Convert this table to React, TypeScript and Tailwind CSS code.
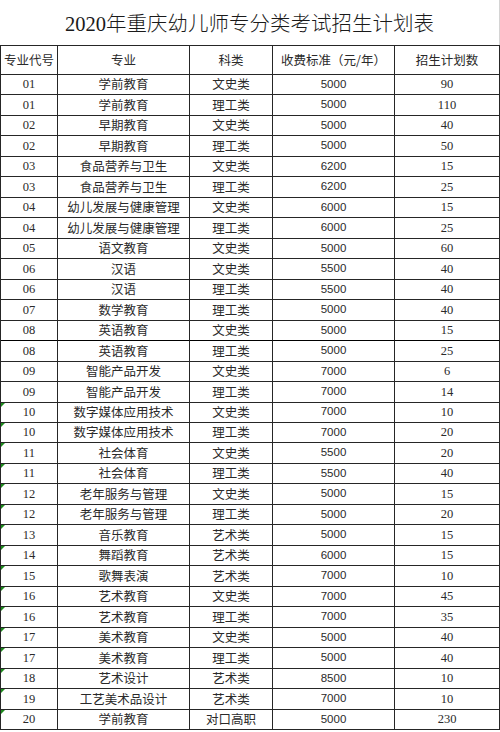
import React from "react";

type Row = [string, string, string, string, string];

const rows: Row[] = [
  ["01", "学前教育", "文史类", "5000", "90"],
  ["01", "学前教育", "理工类", "5000", "110"],
  ["02", "早期教育", "文史类", "5000", "40"],
  ["02", "早期教育", "理工类", "5000", "50"],
  ["03", "食品营养与卫生", "文史类", "6200", "15"],
  ["03", "食品营养与卫生", "理工类", "6200", "25"],
  ["04", "幼儿发展与健康管理", "文史类", "6000", "15"],
  ["04", "幼儿发展与健康管理", "理工类", "6000", "25"],
  ["05", "语文教育", "文史类", "5000", "60"],
  ["06", "汉语", "文史类", "5500", "40"],
  ["06", "汉语", "理工类", "5500", "40"],
  ["07", "数学教育", "理工类", "5000", "40"],
  ["08", "英语教育", "文史类", "5000", "15"],
  ["08", "英语教育", "理工类", "5000", "25"],
  ["09", "智能产品开发", "文史类", "7000", "6"],
  ["09", "智能产品开发", "理工类", "7000", "14"],
  ["10", "数字媒体应用技术", "文史类", "7000", "10"],
  ["10", "数字媒体应用技术", "理工类", "7000", "20"],
  ["11", "社会体育", "文史类", "5500", "20"],
  ["11", "社会体育", "理工类", "5500", "40"],
  ["12", "老年服务与管理", "文史类", "5000", "15"],
  ["12", "老年服务与管理", "理工类", "5000", "20"],
  ["13", "音乐教育", "艺术类", "5000", "15"],
  ["14", "舞蹈教育", "艺术类", "6000", "15"],
  ["15", "歌舞表演", "艺术类", "7000", "10"],
  ["16", "艺术教育", "文史类", "7000", "45"],
  ["16", "艺术教育", "理工类", "7000", "35"],
  ["17", "美术教育", "文史类", "5000", "40"],
  ["17", "美术教育", "理工类", "5000", "40"],
  ["18", "艺术设计", "艺术类", "8500", "10"],
  ["19", "工艺美术品设计", "艺术类", "7000", "10"],
  ["20", "学前教育", "对口高职", "5000", "230"],
];

const cjk = "font-['Noto_Sans_CJK_SC',sans-serif]";
const serif = "font-['Liberation_Serif','Noto_Sans_CJK_SC',serif]";
const sans = "font-['Liberation_Sans','Noto_Sans_CJK_SC',sans-serif]";

const cell =
  "relative flex items-center justify-center border-r border-b border-[#262626] leading-none text-[#2a2a2a] whitespace-nowrap";

function Tri() {
  return (
    <svg className="absolute left-0 top-0" width="4" height="4" viewBox="0 0 4 4">
      <polygon points="0,0 4,0 0,4" fill="#1e8a1e" />
    </svg>
  );
}

export default function App() {
  return (
    <div className="w-[500px] h-[732px] bg-white overflow-hidden">
      <div className="h-[45px] flex items-center justify-center border-r border-[#d4d4d4]">
        <span className="text-[20.5px] leading-none font-light text-[#1a1a1a] font-['Liberation_Serif','Noto_Sans_CJK_SC',serif] pt-[4px]">
          2020年重庆幼儿师专分类考试招生计划表
        </span>
      </div>
      <div className="grid grid-cols-[57px_132px_83px_122px_105px] border-l border-t border-[#262626] w-[500px]">
        {["专业代号", "专业", "科类", "收费标准（元/年）", "招生计划数"].map((h) => (
          <div key={h} className={`${cell} ${cjk} h-[29px] text-[12.5px]`}>
            {h}
          </div>
        ))}
        {rows.map((r, i) => {
          const tri = parseInt(r[0], 10) >= 10;
          const thick = i === 12 ? "border-b-black" : "";
          return (
            <React.Fragment key={i}>
              <div className={`${cell} ${thick} ${serif} h-[20.47px] text-[12.5px]`}>
                {tri && <Tri />}
                {r[0]}
              </div>
              <div className={`${cell} ${thick} ${cjk} h-[20.47px] text-[12.5px]`}>{r[1]}</div>
              <div className={`${cell} ${thick} ${cjk} h-[20.47px] text-[12.5px]`}>{r[2]}</div>
              <div className={`${cell} ${thick} ${sans} h-[20.47px] text-[11.5px]`}>{r[3]}</div>
              <div className={`${cell} ${thick} ${serif} h-[20.47px] text-[12.5px]`}>{r[4]}</div>
            </React.Fragment>
          );
        })}
      </div>
    </div>
  );
}
